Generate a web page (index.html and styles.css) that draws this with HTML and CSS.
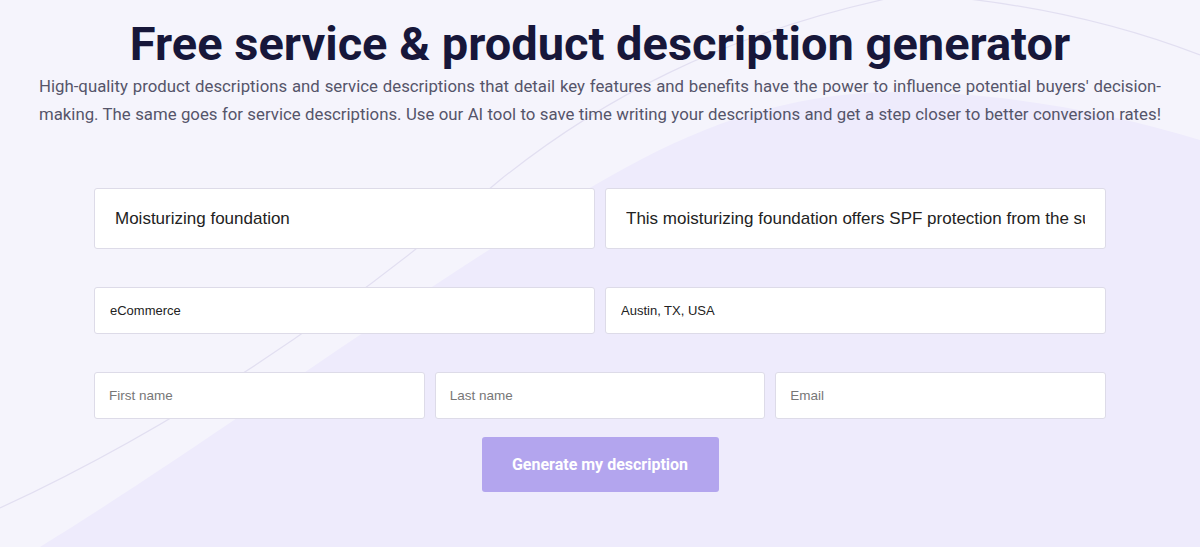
FILE: index.html
```html
<!DOCTYPE html>
<html lang="en">
<head>
<meta charset="utf-8">
<title>Free service & product description generator</title>
<link rel="stylesheet" href="styles.css">
</head>
<body>
<div class="page">
  <svg class="bg" width="1200" height="547" viewBox="0 0 1200 547" aria-hidden="true">
    <path d="M40,547 C230,430 470,250 640,160 C740,108 820,92 900,92 C1000,92 1110,112 1200,140 L1200,547 Z" fill="#eeebfc"/>
    <path d="M0,508 C190,420 360,300 500,180 C600,100 720,35 890,-2" fill="none" stroke="#e2dff1" stroke-width="1.2"/>
    <path d="M960,-2 C1050,8 1130,28 1200,55" fill="none" stroke="#e2dff1" stroke-width="1.2"/>
  </svg>
  <main class="content">
    <h1 class="title">Free service &amp; product description generator</h1>
    <p class="lead">High-quality product descriptions and service descriptions that detail key features and benefits have the power to influence potential buyers' decision-making. The same goes for service descriptions. Use our AI tool to save time writing your descriptions and get a step closer to better conversion rates!</p>
    <form class="form">
      <div class="row row-lg">
        <input class="field field-lg" type="text" value="Moisturizing foundation">
        <input class="field field-lg" type="text" value="This moisturizing foundation offers SPF protection from the sun">
      </div>
      <div class="row row-md">
        <input class="field field-md" type="text" value="eCommerce">
        <input class="field field-md" type="text" value="Austin, TX, USA">
      </div>
      <div class="row row-3">
        <input class="field field-sm" type="text" placeholder="First name">
        <input class="field field-sm" type="text" placeholder="Last name">
        <input class="field field-sm" type="email" placeholder="Email">
      </div>
      <div class="actions">
        <button class="btn" type="button">Generate my description</button>
      </div>
    </form>
  </main>
</div>
</body>
</html>
```
FILE: styles.css
```css
* { box-sizing: border-box; }
html, body { margin: 0; padding: 0; }
body {
  background: #f5f4fc;
  font-family: Roboto, "Liberation Sans", Arial, sans-serif;
  overflow: hidden;
}
.page {
  position: relative;
  width: 1200px;
  height: 547px;
  overflow: hidden;
}
.bg {
  position: absolute;
  left: 0;
  top: 0;
  z-index: 0;
}
.content {
  position: relative;
  z-index: 1;
  display: flex;
  flex-direction: column;
  align-items: center;
  padding-top: 16px;
}
.title {
  margin: 0;
  font-family: Roboto, sans-serif;
  font-weight: 700;
  font-size: 47px;
  line-height: 56px;
  color: #17173a;
}
.lead {
  margin: 0;
  width: 1122px;
  text-align: justify;
  text-align-last: justify;
  font-family: Roboto, sans-serif;
  font-size: 16.8px;
  line-height: 28px;
  color: #55556a;
}
.form {
  width: 1012px;
  margin-top: 60px;
  display: flex;
  flex-direction: column;
}
.row {
  display: grid;
  gap: 10px;
}
.row-lg { grid-template-columns: 1fr 1fr; }
.row-md { grid-template-columns: 1fr 1fr; margin-top: 38px; }
.row-3 { grid-template-columns: 1fr 1fr 1fr; margin-top: 38px; }
.field {
  display: block;
  width: 100%;
  background: #fff;
  border: 1px solid #dddbe8;
  border-radius: 3px;
  font-family: "Liberation Sans", Arial, sans-serif;
  color: #222;
  outline: none;
}
.field::placeholder { color: #777; }
.field-lg {
  height: 61px;
  padding: 0 20px;
  font-size: 17px;
}
.field-md {
  height: 47px;
  padding: 0 15px;
  font-size: 13px;
}
.field-sm {
  height: 47px;
  padding: 0 14px;
  font-size: 13.5px;
}
.actions {
  display: flex;
  justify-content: center;
  margin-top: 18px;
}
.btn {
  width: 237px;
  height: 55px;
  border: 0;
  border-radius: 3px;
  background: #b3a5ee;
  color: #fff;
  font-family: Roboto, sans-serif;
  font-weight: 700;
  font-size: 16px;
  cursor: pointer;
}
```
